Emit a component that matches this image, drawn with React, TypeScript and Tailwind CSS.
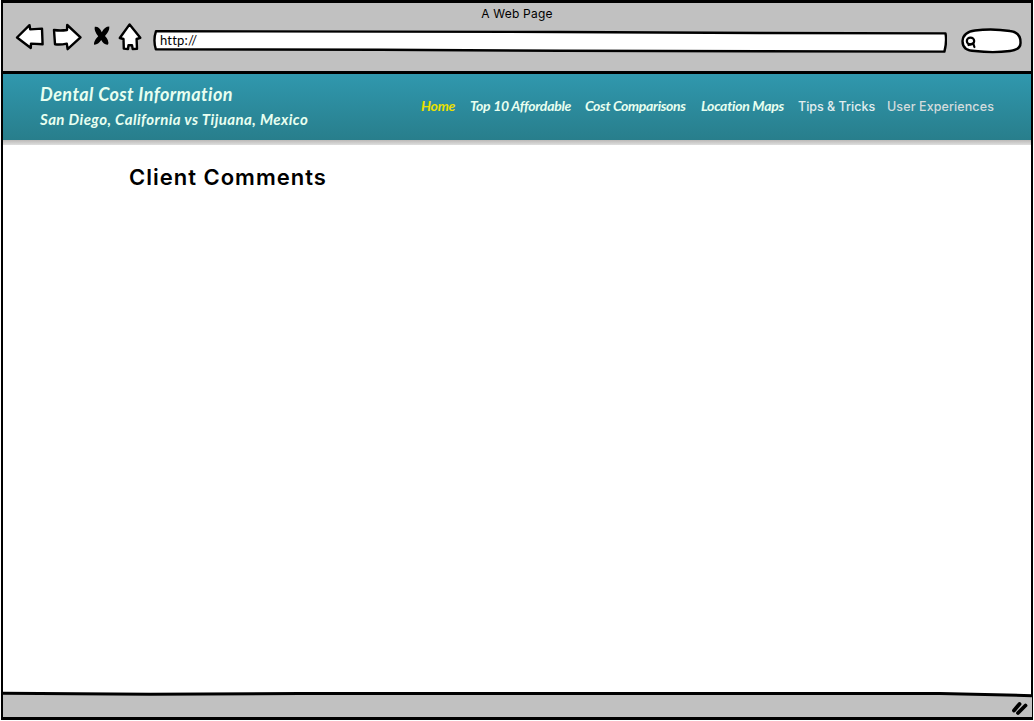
import React from "react";

const stroke = {
  fill: "#fff",
  stroke: "#000",
  strokeWidth: 2.4,
  strokeLinejoin: "round" as const,
  strokeLinecap: "round" as const,
};

function BrowserIcons() {
  return (
    <svg width="130" height="34" viewBox="14 20 130 34" className="block shrink-0">
      <path {...stroke} d="M17 37.5 L29.5 25.2 L30.2 29.4 L42 28.6 L42.6 44.3 L31 43.6 L30.8 48 Z" />
      <path {...stroke} d="M54 30 Q60 31 67 30 L67.2 25 L80.5 37.4 L67.6 49.2 L66.8 43.6 Q60 45 55 44.2 Z" />
      <path d="M94.8 26.8 Q99 26.2 101.8 32.2 Q104.5 26.6 109.3 26.6 Q109.8 31 105 36 Q109.5 40.5 108 44.6 Q104 45.2 101.2 40 Q98 45 94 44.6 Q93.6 41 98.2 36.2 Q93.8 31 94.8 26.8 Z" fill="#000" />
      <path {...stroke} d="M129.6 24.4 L140.3 37.8 L136.6 39 L137 48.8 L132.7 49 L132 45.2 L128.5 45.2 L128 49 L123.8 48.6 L123.5 39 L119.8 38 Z" />
    </svg>
  );
}

function AddressBar() {
  return (
    <div className="grid h-[24px] w-[794px] shrink-0">
      <svg width="794" height="24" viewBox="153 29 794 24" className="col-start-1 row-start-1 block">
        <path {...stroke} d="M156 31.2 L560 32 L760 33 L945.5 33.4 Q947 42 944.4 51.6 L760 51.2 L560 50.8 L380 49.8 L155.8 49.2 Q153 40 156 31.2 Z" />
      </svg>
      <span className="col-start-1 row-start-1 pl-[7px] pt-[4px] font-['Lato',sans-serif] text-[13px] leading-[15px] tracking-[0.2px] text-black">http://</span>
    </div>
  );
}

function SearchField() {
  return (
    <svg width="62" height="28" viewBox="960 27 62 28" className="block shrink-0">
      <path {...stroke} d="M975 30.5 Q992 28.2 1010 31 C1018 32 1020.5 36 1020.5 42 C1021 47 1018 50 1010 51 Q993 53.2 975 51 C966 51 962.5 47 962.5 41 C963 35 967 31.5 975 30.5 Z" />
      <ellipse cx="970.5" cy="41" rx="3.7" ry="3.3" fill="none" stroke="#000" strokeWidth="2.2" />
      <path d="M968.5 45 L973.2 43.4 L974.4 47" fill="none" stroke="#000" strokeWidth="2.2" strokeLinecap="round" />
    </svg>
  );
}

function BrowserChrome() {
  return (
    <header className="h-[71px] shrink-0 border-b-[3px] border-black bg-[#c1c1c1]">
      <div className="h-[17px] pt-[2px] text-center font-['Inter',sans-serif] text-[12px] leading-[18px] tracking-[0.2px] text-black">A Web Page</div>
      <div className="flex pl-[11px]">
        <BrowserIcons />
        <div className="ml-[9px] mt-[9px]"><AddressBar /></div>
        <div className="ml-[13px] mt-[7px]"><SearchField /></div>
      </div>
    </header>
  );
}

function SiteHeader() {
  return (
    <div className="shrink-0">
      <div className="flex h-[66px] bg-linear-to-b from-[#3098ae] to-[#287e8c] font-['Lato',sans-serif] font-bold italic text-[#e8fff0]">
        <div className="w-[381px] shrink-0 pl-[37px] pt-[8px]">
          <div className="whitespace-nowrap text-[18px] leading-[25px] tracking-[0.43px]">Dental Cost Information</div>
          <div className="whitespace-nowrap text-[15px] leading-[25px] tracking-[0.42px]">San Diego, California vs Tijuana, Mexico</div>
        </div>
        <nav className="flex whitespace-nowrap pl-[37px] pt-[22px] text-[14px] leading-[20px] tracking-[-0.27px]">
          <a className="w-[49px] text-[#ebe000]">Home</a>
          <a className="w-[115px]">Top 10 Affordable</a>
          <a className="w-[116px] tracking-[-0.33px]">Cost Comparisons</a>
          <a className="w-[97px]">Location Maps</a>
          <a className="w-[89px] pt-px font-['Inter',sans-serif] text-[12.5px] font-medium not-italic tracking-[0px] text-[#e2eef0]">Tips &amp; Tricks</a>
          <a className="pt-px font-['Inter',sans-serif] text-[12.5px] font-medium not-italic tracking-[0.1px] text-[#d3dcdd]">User Experiences</a>
        </nav>
      </div>
      <div className="h-[5px] bg-linear-to-b from-[#bbb9b7] to-[#dedede]" />
    </div>
  );
}

function StatusBar() {
  return (
    <footer className="h-[26px] shrink-0">
      <svg width="1029" height="26" viewBox="3 691 1029 26" className="block">
        <path d="M3 693.5 L150 694.3 L300 693.5 L620 693.5 L940 693.5 L1032 695.7 V718 H3 Z" fill="#c1c1c1" />
        <path d="M3 693.3 L150 694.2 L300 693.5 L620 693.5 L940 693.5 L1032 695.7" fill="none" stroke="#000" strokeWidth="3" />
        <path d="M1014 710.5 L1019.5 704 M1018 713 L1025.5 705.5" fill="none" stroke="#000" strokeWidth="3.8" strokeLinecap="round" />
      </svg>
    </footer>
  );
}

export default function App() {
  return (
    <div className="h-[721px] w-[1034px] overflow-hidden bg-white pb-px pl-px pr-px">
      <div className="flex h-[720px] flex-col border-x-2 border-b-[3px] border-t-[3px] border-black bg-white">
        <BrowserChrome />
        <SiteHeader />
        <main className="flex-1 pl-[126px] pt-[16px]">
          <h1 className="font-['Inter',sans-serif] text-[22px] font-semibold leading-[32px] tracking-[1px] text-black">Client Comments</h1>
        </main>
        <StatusBar />
      </div>
    </div>
  );
}
